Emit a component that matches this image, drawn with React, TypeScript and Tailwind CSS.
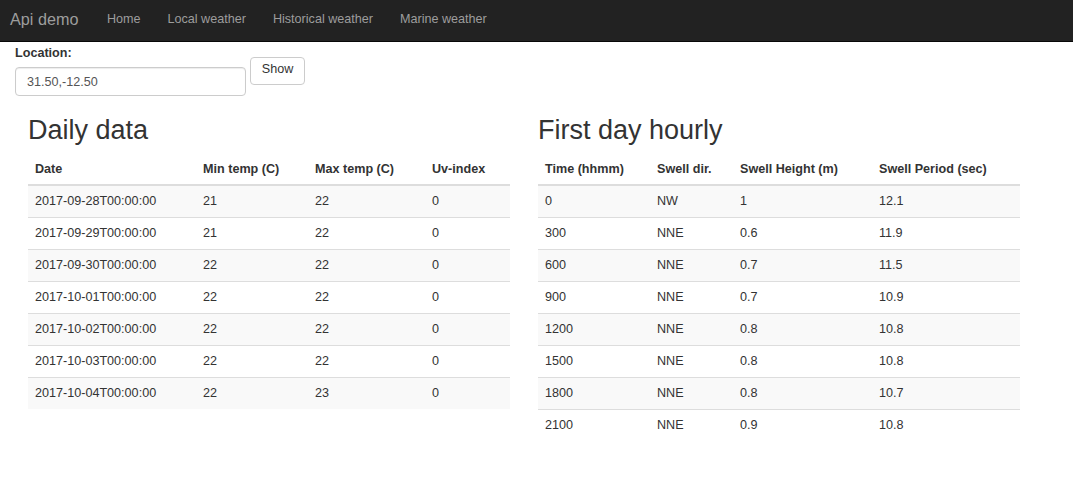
import React from "react";

const daily = [
  ["2017-09-28T00:00:00", "21", "22", "0"],
  ["2017-09-29T00:00:00", "21", "22", "0"],
  ["2017-09-30T00:00:00", "22", "22", "0"],
  ["2017-10-01T00:00:00", "22", "22", "0"],
  ["2017-10-02T00:00:00", "22", "22", "0"],
  ["2017-10-03T00:00:00", "22", "22", "0"],
  ["2017-10-04T00:00:00", "22", "23", "0"],
];

const hourly = [
  ["0", "NW", "1", "12.1"],
  ["300", "NNE", "0.6", "11.9"],
  ["600", "NNE", "0.7", "11.5"],
  ["900", "NNE", "0.7", "10.9"],
  ["1200", "NNE", "0.8", "10.8"],
  ["1500", "NNE", "0.8", "10.8"],
  ["1800", "NNE", "0.8", "10.7"],
  ["2100", "NNE", "0.9", "10.8"],
];

function DataTable({
  title,
  headers,
  widths,
  rows,
}: {
  title: string;
  headers: string[];
  widths: string[];
  rows: string[][];
}) {
  return (
    <div className="w-[482px]">
      <h2 className="text-[27px] leading-[30px] font-normal text-[#333] mt-[19px] mb-[9px]">{title}</h2>
      <table className="w-full border-collapse table-fixed">
        <colgroup>
          {widths.map((w, i) => (
            <col key={i} className={w} />
          ))}
        </colgroup>
        <thead>
          <tr>
            {headers.map((h) => (
              <th
                key={h}
                className="text-left font-bold px-[7px] pt-[7px] pb-[6px] leading-[17px] border-b-2 border-[#ddd] whitespace-nowrap"
              >
                {h}
              </th>
            ))}
          </tr>
        </thead>
        <tbody>
          {rows.map((r, i) => (
            <tr key={i} className={i % 2 === 0 ? "bg-[#f9f9f9]" : "bg-white"}>
              {r.map((c, j) => (
                <td key={j} className="px-[7px] py-[7px] leading-[17px] border-t border-[#ddd] whitespace-nowrap">
                  {c}
                </td>
              ))}
            </tr>
          ))}
        </tbody>
      </table>
    </div>
  );
}

export default function App() {
  return (
    <div className="min-h-[499px] bg-white text-[#333] text-[12.6px]" style={{ fontFamily: '"Liberation Sans", Arial, sans-serif' }}>
      <nav className="h-[42px] bg-[#222] border-b border-[#080808] flex items-center pb-[3px]">
        <a className="pl-[10px] pr-[15px] text-[16.2px] text-[#9d9d9d] leading-[20px]">Api demo</a>
        <ul className="flex items-center text-[#9d9d9d] leading-[18px]">
          <li className="px-[13.5px]">Home</li>
          <li className="px-[13.5px]">Local weather</li>
          <li className="px-[13.5px]">Historical weather</li>
          <li className="px-[13.5px]">Marine weather</li>
        </ul>
      </nav>

      <div className="flex items-start pl-[15px] pt-[3px]">
        <div className="flex flex-col">
          <label className="font-bold leading-[17px] mb-[5px]">Location:</label>
          <input
            readOnly
            value="31.50,-12.50"
            className="w-[231px] h-[29px] border border-[#ccc] rounded-[4px] px-[11px] text-[12.6px] text-[#555] shadow-[inset_0_1px_1px_rgba(0,0,0,0.075)] outline-none"
          />
        </div>
        <button className="ml-[4px] mt-[12px] w-[55px] h-[28px] border border-[#ccc] rounded-[4px] bg-white text-[#333] text-[12.6px] leading-[17px] pb-[3px]">
          Show
        </button>
      </div>

      <div className="flex gap-[28px] pl-[28px]">
        <DataTable
          title="Daily data"
          headers={["Date", "Min temp (C)", "Max temp (C)", "Uv-index"]}
          widths={["w-[168px]", "w-[112px]", "w-[117px]", "w-[85px]"]}
          rows={daily}
        />
        <DataTable
          title="First day hourly"
          headers={["Time (hhmm)", "Swell dir.", "Swell Height (m)", "Swell Period (sec)"]}
          widths={["w-[112px]", "w-[83px]", "w-[139px]", "w-[148px]"]}
          rows={hourly}
        />
      </div>
    </div>
  );
}
